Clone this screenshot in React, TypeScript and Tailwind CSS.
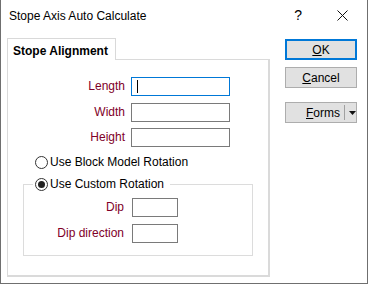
import React from "react";

const Label = ({ text, width }: { text: string; width: string }) => (
  <span className={`${width} text-right text-[#800028] leading-[15px]`}>{text}</span>
);

const Radio = ({ checked, label }: { checked?: boolean; label: string }) => (
  <div className="flex items-center h-[15px]">
    <span className="w-[13px] h-[13px] rounded-full border border-[#333333] bg-white flex items-center justify-center">
      {checked && <span className="w-[7px] h-[7px] rounded-full bg-[#222222]" />}
    </span>
    <span className="ml-[2px] leading-[15px]">{label}</span>
  </div>
);

const Button = ({
  children,
  focused,
  className = "",
}: {
  children: React.ReactNode;
  focused?: boolean;
  className?: string;
}) => (
  <div
    className={`w-[72px] h-[21px] bg-[#e1e1e1] flex items-center justify-center ${
      focused ? "border-2 border-[#0078d7]" : "border border-[#adadad]"
    } ${className}`}
  >
    {children}
  </div>
);

export default function App() {
  return (
    <div className="w-[368px] h-[284px] bg-white border-x border-b border-[#6f6f6f] flex flex-col text-[12px] text-black font-['Liberation_Sans',Arial,sans-serif]">
      {/* title bar */}
      <div className="h-[30px] flex items-center shrink-0">
        <span className="ml-[8px] mt-px">Stope Axis Auto Calculate</span>
        <span className="ml-auto mr-[35px] text-[14px] mt-px">?</span>
        <svg width="11" height="11" viewBox="0 0 11 11" className="mr-[19px]">
          <path d="M0.5 0.5 L10.5 10.5 M10.5 0.5 L0.5 10.5" stroke="#111" strokeWidth="1" />
        </svg>
      </div>

      <div className="flex pl-[6px] pt-[8px]">
        {/* left: tab + panel */}
        <div className="flex flex-col w-[263px]">
          <div className="w-[109px] h-[22px] border border-b-0 border-[#d9d9d9] bg-white relative z-10 -mb-px font-bold pl-[5px] pt-[5px] leading-[14px]">
            Stope Alignment
          </div>
          <div className="w-[263px] h-[218px] border border-r-2 border-b-2 border-[#dadada] flex flex-col pt-[17px]">
            <div className="flex items-center">
              <Label text="Length" width="w-[117px]" />
              <div className="ml-[6px] w-[99px] h-[19px] border border-[#0078d7] flex items-center pl-[5px]">
                <span className="w-px h-[13px] bg-black" />
              </div>
            </div>
            <div className="flex items-center mt-[7px]">
              <Label text="Width" width="w-[117px]" />
              <div className="ml-[6px] w-[99px] h-[19px] border border-[#7a7a7a]" />
            </div>
            <div className="flex items-center mt-[6px]">
              <Label text="Height" width="w-[117px]" />
              <div className="ml-[6px] w-[99px] h-[19px] border border-[#7a7a7a]" />
            </div>

            <div className="ml-[27px] mt-[8px]">
              <Radio label="Use Block Model Rotation" />
            </div>

            <div className="relative ml-[15px] mt-[14px] w-[230px] h-[72px] border border-[#dcdcdc] pt-[13px]">
              <div className="absolute -top-[8px] left-[9px] px-[2px] bg-white pr-[6px]">
                <Radio checked label="Use Custom Rotation" />
              </div>
              <div className="flex items-center">
                <Label text="Dip" width="w-[100px]" />
                <div className="ml-[8px] w-[46px] h-[19px] border border-[#7a7a7a]" />
              </div>
              <div className="flex items-center mt-[7px]">
                <Label text="Dip direction" width="w-[100px]" />
                <div className="ml-[8px] w-[46px] h-[19px] border border-[#7a7a7a]" />
              </div>
            </div>
          </div>
        </div>

        {/* right: buttons */}
        <div className="flex flex-col ml-[15px] mt-px">
          <Button focused>
            <span><span className="underline">O</span>K</span>
          </Button>
          <Button className="mt-[7px]">
            <span><span className="underline">C</span>ancel</span>
          </Button>
          <Button className="mt-[14px] justify-start">
            <span className="ml-[20px] shrink-0"><span className="underline">F</span>orms</span>
            <span className="ml-[4px] w-px h-[15px] bg-[#a0a0a0] shrink-0" />
            <svg width="7" height="4" viewBox="0 0 7 4" className="ml-[4px] shrink-0">
              <path d="M0 0 L7 0 L3.5 4 Z" fill="#111" />
            </svg>
          </Button>
        </div>
      </div>
    </div>
  );
}
